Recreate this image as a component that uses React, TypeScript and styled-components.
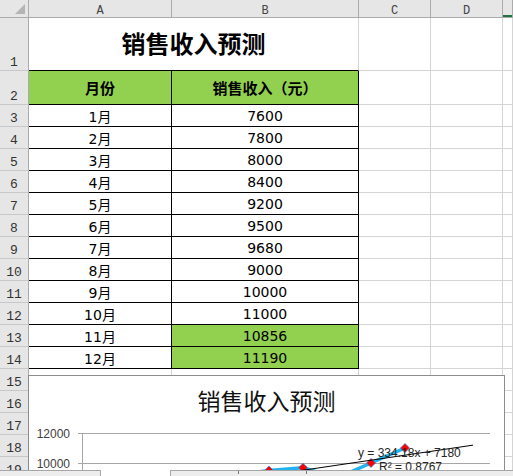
import React from "react";
import styled, { createGlobalStyle } from "styled-components";

const Global = createGlobalStyle`
  html, body { margin: 0; padding: 0; overflow: hidden; background: #fff; }
  body { width: 513px; height: 476px; }
`;

const Sheet = styled.div`
  position: relative;
  width: 513px;
  height: 476px;
  overflow: hidden;
  display: grid;
  grid-template-columns: 29px 143px 187px 72px 72px 1fr;
  grid-template-rows: 18px 53px 34px repeat(17, 22px);
  font-family: "DejaVu Sans", "Noto Sans CJK SC", sans-serif;
  color: #000;
`;

const Corner = styled.div`
  position: relative;
  box-sizing: border-box;
  background: #e6e6e6;
  border-right: 1px solid #ababab;
  border-bottom: 1px solid #ababab;
  &::after {
    content: "";
    position: absolute;
    left: 15px;
    top: 4px;
    width: 0;
    height: 0;
    border-left: 10px solid transparent;
    border-bottom: 10px solid #b4b4b4;
  }
`;

const ColHead = styled.div<{ $selected?: boolean }>`
  box-sizing: border-box;
  background: #e6e6e6;
  border-right: 1px solid #ababab;
  border-bottom: 1px solid #ababab;
  box-shadow: ${(p) => (p.$selected ? "inset 0 -2px 0 #217346" : "none")};
  display: flex;
  align-items: center;
  justify-content: center;
  padding-top: 4px;
  font-family: "Liberation Mono", monospace;
  font-size: 12px;
  color: #444;
`;

const RowHead = styled.div`
  box-sizing: border-box;
  background: #e6e6e6;
  border-right: 1px solid #ababab;
  border-bottom: 1px solid #c8c8c8;
  display: flex;
  align-items: flex-end;
  justify-content: center;
  font-family: "Liberation Mono", monospace;
  font-size: 13px;
  line-height: 15px;
  color: #333;
`;

const Cell = styled.div<{ $table?: boolean; $fill?: string; $bold?: boolean }>`
  box-sizing: border-box;
  border-right: 1px solid ${(p) => (p.$table ? "#000" : "#d4d4d4")};
  border-bottom: 1px solid ${(p) => (p.$table ? "#000" : "#d4d4d4")};
  background: ${(p) => p.$fill || "#fff"};
  display: flex;
  align-items: center;
  justify-content: center;
  font-size: ${(p) => (p.$bold ? "15px" : "14px")};
  font-weight: ${(p) => (p.$bold ? 700 : 400)};
  font-family: ${(p) =>
    p.$bold ? `"Noto Sans CJK SC", sans-serif` : `"DejaVu Sans", "Noto Sans CJK SC", sans-serif`};
  white-space: nowrap;
`;

const TitleCell = styled.div`
  box-sizing: border-box;
  grid-column: span 2;
  border-right: 1px solid #d4d4d4;
  border-bottom: 1px solid #000;
  display: flex;
  align-items: center;
  justify-content: center;
  padding-bottom: 3px;
  font-family: "Noto Sans CJK SC", sans-serif;
  font-weight: 700;
  font-size: 24px;
`;

const Chart = styled.div`
  position: absolute;
  left: 28px;
  top: 375px;
  width: 477px;
  height: 130px;
  box-sizing: border-box;
  background: #fff;
  border: 1px solid #8c8c8c;
`;

const ChartTitle = styled.div`
  position: relative;
  margin-top: 9px;
  line-height: 30px;
  text-align: center;
  font-family: "Noto Sans CJK SC", sans-serif;
  font-size: 23px;
  color: #111;
`;

const Plot = styled.svg`
  position: absolute;
  left: 0;
  top: 0;
`;

const Strip = styled.div`
  position: absolute;
  left: 0;
  right: 0;
  top: 470px;
  height: 6px;
  display: flex;
`;

const StripBox = styled.div<{ $side: "left" | "right" }>`
  position: relative;
  box-sizing: border-box;
  height: 100%;
  background: #ededed;
  border-top: 1px solid #a6a6a6;
  ${(p) =>
    p.$side === "left"
      ? "width: 101px; border-right: 1px solid #a6a6a6;"
      : "flex: 1; border-left: 1px solid #a6a6a6;"}
`;

const StripGap = styled.div`
  width: 69px;
`;

const Tick = styled.span<{ $x: number }>`
  position: absolute;
  top: 0;
  left: ${(p) => p.$x}px;
  width: 1px;
  height: 3px;
  background: #777;
`;

const months = ["1月", "2月", "3月", "4月", "5月", "6月", "7月", "8月", "9月", "10月", "11月", "12月"];
const values = [7600, 7800, 8000, 8400, 9200, 9500, 9680, 9000, 10000, 11000, 10856, 11190];

const px = (n: number) => 82 + (n - 0.5) * 34;
const py = (v: number) => 613 - v * 0.015;

export default function App() {
  const series = values.slice(0, 10).map((v, i) => [px(i + 1), py(v)] as const);
  const trend = (n: number) => 334.18 * n + 7180;
  return (
    <>
      <Global />
      <Sheet>
        <Corner />
        <ColHead>A</ColHead>
        <ColHead>B</ColHead>
        <ColHead>C</ColHead>
        <ColHead>D</ColHead>
        <ColHead $selected />

        <RowHead>1</RowHead>
        <TitleCell>销售收入预测</TitleCell>
        <Cell />
        <Cell />
        <Cell />

        <RowHead>2</RowHead>
        <Cell $table $bold $fill="#92d050">月份</Cell>
        <Cell $table $bold $fill="#92d050">销售收入（元）</Cell>
        <Cell />
        <Cell />
        <Cell />

        {months.map((m, i) => (
          <React.Fragment key={m}>
            <RowHead>{i + 3}</RowHead>
            <Cell $table>{m}</Cell>
            <Cell $table $fill={i >= 10 ? "#92d050" : undefined}>{values[i]}</Cell>
            <Cell />
            <Cell />
            <Cell />
          </React.Fragment>
        ))}

        {[15, 16, 17, 18, 19].map((r) => (
          <React.Fragment key={r}>
            <RowHead>{r}</RowHead>
            <Cell />
            <Cell />
            <Cell />
            <Cell />
            <Cell />
          </React.Fragment>
        ))}

        <Chart>
          <Plot width={475} height={128} viewBox="29 376 475 128">
            <line x1={82} x2={490} y1={433.5} y2={433.5} stroke="#a6a6a6" strokeWidth={1} />
            <line x1={82} x2={490} y1={463.5} y2={463.5} stroke="#a6a6a6" strokeWidth={1} />
            <line x1={78} x2={82} y1={433.5} y2={433.5} stroke="#a6a6a6" strokeWidth={1} />
            <line x1={78} x2={82} y1={463.5} y2={463.5} stroke="#a6a6a6" strokeWidth={1} />
            <line x1={82.5} x2={82.5} y1={433} y2={520} stroke="#a6a6a6" strokeWidth={1} />
            <text x={70} y={437.5} textAnchor="end" fontFamily="Liberation Sans, sans-serif" fontSize={12} fill="#404040">
              12000
            </text>
            <text x={70} y={467.5} textAnchor="end" fontFamily="Liberation Sans, sans-serif" fontSize={12} fill="#404040">
              10000
            </text>
            <polyline
              points={series.map(([x, y]) => `${x},${y}`).join(" ")}
              fill="none"
              stroke="#1fb4ef"
              strokeWidth={3.5}
              strokeLinejoin="round"
            />
            {series.map(([x, y], i) => (
              <polygon
                key={i}
                points={`${x},${y - 4.5} ${x + 4.5},${y} ${x},${y + 4.5} ${x - 4.5},${y}`}
                fill="#ff0000"
                stroke="#3d7fd6"
                strokeWidth={0.8}
              />
            ))}
            <line x1={px(1)} y1={py(trend(1))} x2={px(12)} y2={py(trend(12))} stroke="#000" strokeWidth={1} />
            <text x={358} y={456.5} fontFamily="Liberation Sans, sans-serif" fontSize={12} fill="#262626">
              y = 334.18x + 7180
            </text>
            <text x={379} y={470.5} fontFamily="Liberation Sans, sans-serif" fontSize={12} fill="#262626">
              R² = 0.8767
            </text>
          </Plot>
          <ChartTitle>销售收入预测</ChartTitle>
        </Chart>

        <Strip>
          <StripBox $side="left" />
          <StripGap />
          <StripBox $side="right">
            <Tick $x={67} />
            <Tick $x={135} />
          </StripBox>
        </Strip>
      </Sheet>
    </>
  );
}
